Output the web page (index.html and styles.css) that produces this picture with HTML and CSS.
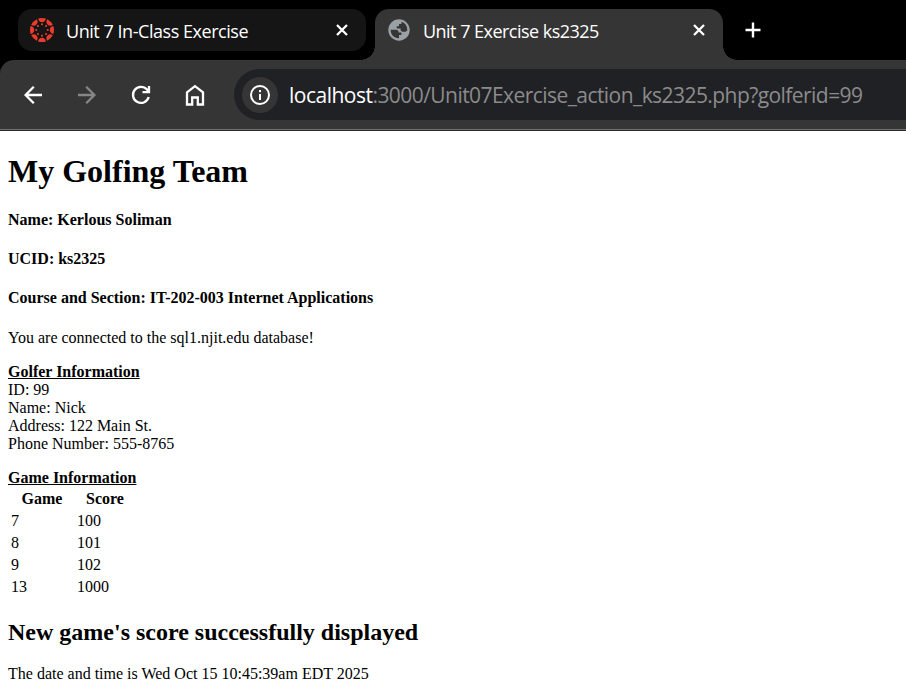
FILE: index.html
```html
<!DOCTYPE html>
<html lang="en">
<head>
<meta charset="utf-8">
<title>Unit 7 Exercise ks2325</title>
<link rel="stylesheet" href="styles.css">
</head>
<body>
<header class="browser">
  <div class="tabs">
    <div class="tab">
      <svg class="favicon" viewBox="0 0 24 24" width="24" height="24" fill="#ea3c2d">
        <defs><g id="seg"><path d="M8.100 .6Q12-.6 15.900 .6Q15.200 4.200 12 4.200Q8.800 4.200 8.100 .6Z"/><circle cx="12" cy="6.200" r="1.050"/></g></defs>
        <use href="#seg"/><use href="#seg" transform="rotate(45 12 12)"/><use href="#seg" transform="rotate(90 12 12)"/><use href="#seg" transform="rotate(135 12 12)"/><use href="#seg" transform="rotate(180 12 12)"/><use href="#seg" transform="rotate(225 12 12)"/><use href="#seg" transform="rotate(270 12 12)"/><use href="#seg" transform="rotate(315 12 12)"/>
      </svg>
      <span class="tab-title first-title">Unit 7 In-Class Exercise</span>
      <svg class="close" viewBox="0 0 12 12" width="12" height="12"><path d="M1 1L11 11M11 1L1 11"/></svg>
    </div>
    <div class="tab active">
      <svg class="favicon" viewBox="0 0 24 24" width="24" height="24">
        <circle cx="12" cy="12" r="10.700" fill="#9aa0a6"/>
        <path fill="#353535" d="M14.500 3.800C18 4.800 20.400 8 20.300 12.500L18.500 13.800H15.200L13.600 12.400V10.500H9.700V8.200H12V6H14.500ZM3.700 11.800H8.800Q11.600 12 11.600 14.400H14.400V17H12V20.200C6.900 20.300 3.600 16.500 3.700 11.800Z"/>
      </svg>
      <span class="tab-title second-title">Unit 7 Exercise ks2325</span>
      <svg class="close" viewBox="0 0 12 12" width="12" height="12"><path d="M1 1L11 11M11 1L1 11"/></svg>
    </div>
    <svg class="new-tab" viewBox="0 0 16 16" width="16" height="16"><path d="M8 .5V15.500M.5 8H15.500"/></svg>
  </div>
  <nav class="toolbar">
    <svg class="nav-icon" viewBox="0 0 24 24"><path d="M21 12H5M12.800 3.800L4.600 12L12.800 20.200"/></svg>
    <svg class="nav-icon dim" viewBox="0 0 24 24"><path d="M3 12H19M11.200 3.800L19.400 12L11.200 20.200"/></svg>
    <svg class="nav-icon" viewBox="0 0 24 24"><path d="M19.700 14A8 8 0 1 1 18 6.600L20 9M20 3V9.200H13.500"/></svg>
    <svg class="nav-icon" viewBox="0 0 24 24"><path d="M4 9.300L12 3.200L20 9.300V21.500H14.800V14.500H9.200V21.500H4Z"/></svg>
    <div class="address">
      <span class="info"><svg viewBox="0 0 22 22" width="22" height="22"><circle cx="11" cy="11" r="9"/><path d="M11 10V16M11 6V8.200"/></svg></span>
      <span class="url"><span class="host">localhost</span><span class="path">:3000/Unit07Exercise_action_ks2325.php?golferid=99</span></span>
    </div>
  </nav>
</header>
<main>
  <h1>My Golfing Team</h1>
  <h4>Name: Kerlous Soliman</h4>
  <h4>UCID: ks2325</h4>
  <h4>Course and Section: IT-202-003 Internet Applications</h4>
  <p>You are connected to the sql1.njit.edu database!</p>
  <p><b><u>Golfer Information</u></b><br>ID: 99<br>Name: Nick<br>Address: 122 Main St.<br>Phone Number: 555-8765</p>
  <b><u>Game Information</u></b>
  <table>
    <tr><th class="game">Game</th><th class="score">Score</th></tr>
    <tr><td>7</td><td>100</td></tr>
    <tr><td>8</td><td>101</td></tr>
    <tr><td>9</td><td>102</td></tr>
    <tr><td>13</td><td>1000</td></tr>
  </table>
  <h2>New game's score successfully displayed</h2>
  <p>The date and time is Wed Oct 15 10:45:39am EDT 2025</p>
</main>
</body>
</html>
```
FILE: styles.css
```css
* { box-sizing: border-box; }
html { overflow: hidden; }
body { margin: 0; background: #fff; color: #000; }
.browser { height: 131px; background: #000; font-family: "Open Sans", "Noto Sans", sans-serif; }
.tabs { height: 60px; display: flex; align-items: flex-start; padding: 9px 0 0 18px; gap: 9px; }
.tab { width: 348px; height: 42px; display: flex; align-items: center; padding: 0 18px 0 12px; background: #151515; border-radius: 14px; }
.active { position: relative; height: 51px; padding-bottom: 9px; background: #353535; border-radius: 14px 14px 0 0; }
.active::before, .active::after { content: ""; position: absolute; bottom: 0; width: 14px; height: 14px; }
.active::before { left: -14px; background: radial-gradient(circle at 0 0, #000 13.5px, #353535 14px); }
.active::after { right: -14px; background: radial-gradient(circle at 100% 0, #000 13.5px, #353535 14px); }
.favicon { flex: none; }
.tab-title { margin-left: 12px; color: #fff; font-size: 18px; line-height: 24px; white-space: nowrap; position: relative; top: 1px; }
.first-title { letter-spacing: -0.46px; }
.second-title { letter-spacing: -0.53px; }
.close { margin-left: auto; fill: none; stroke: #fff; stroke-width: 2.3; }
.new-tab { margin: 13px 0 0 13px; fill: none; stroke: #fff; stroke-width: 2.4; }
.toolbar { height: 71px; display: flex; align-items: flex-start; padding-left: 21px; background: #353535; border-radius: 14px 0 0 0; box-shadow: inset 0 -1px #292929, inset 0 -2px #707070; }
.nav-icon { flex: none; width: 24px; height: 24px; margin: 23px 30px 0 0; fill: none; stroke: #fff; stroke-width: 2.3; }
.dim { stroke: #868686; }
.address { flex: 1; min-width: 0; height: 51px; margin: 9px 0 0 -3px; padding-left: 8px; display: flex; align-items: center; background: #202125; border-radius: 26px 0 0 26px; }
.info { flex: none; width: 36px; height: 36px; display: grid; place-items: center; background: #353535; border-radius: 50%; }
.info svg { fill: none; stroke: #fff; stroke-width: 2; }
.url { margin-left: 11px; font-size: 21px; line-height: 30px; white-space: nowrap; letter-spacing: -0.5px; }
.host { color: #fff; }
.path { color: #8b8b8b; letter-spacing: -0.56px; }
main { display: flow-root; padding: 1px 8px 0; font: 16px/18px "Liberation Serif", "Times New Roman", serif; }
h1 { margin: 21.44px 0; font-size: 32px; line-height: 36px; }
h4 { margin: 21.28px 0; font-size: 16px; }
h2 { margin: 19.92px 0; font-size: 24px; line-height: 27px; }
p { margin: 16px 0; }
table { border-spacing: 2px; border-collapse: separate; }
th, td { padding: 1px; }
.game { width: 64px; }
.score { width: 58px; }
```
